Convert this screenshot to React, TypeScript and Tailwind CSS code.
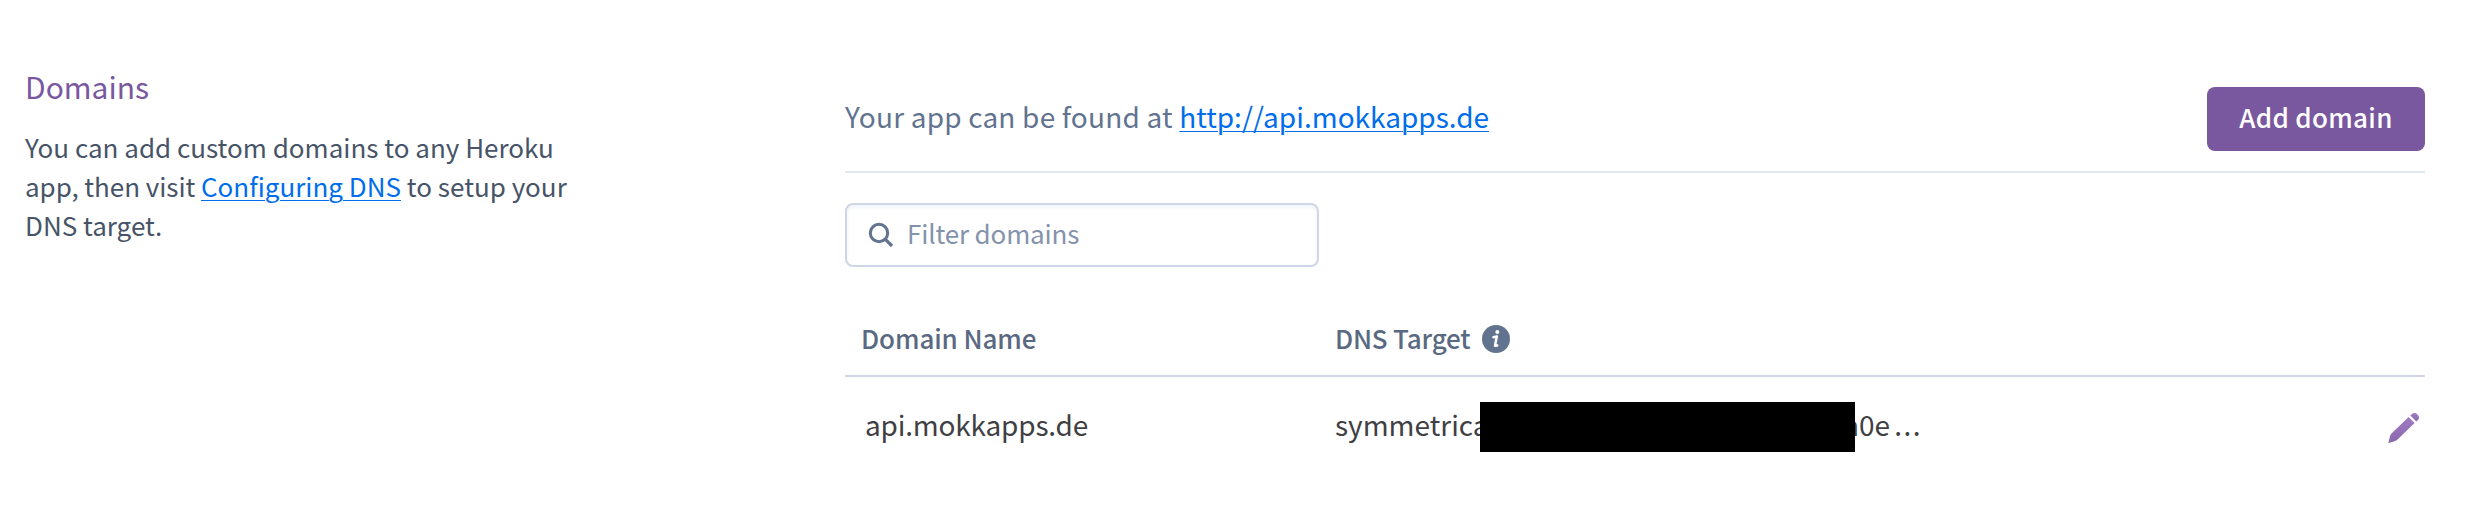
function SearchIcon() {
  return (
    <svg className="ml-[21px] mt-[17px] h-[28px] w-[28px] shrink-0" viewBox="0 0 28 28" fill="none" stroke="#62738f">
      <circle cx="11" cy="11" r="8.7" strokeWidth="3" />
      <path d="M17.2 17.2L24 24" strokeWidth="3.2" />
    </svg>
  );
}

function InfoIcon() {
  return (
    <svg className="mt-[18px] h-[28px] w-[28px]" viewBox="0 0 28 28">
      <circle cx="14" cy="14" r="14" fill="#62738f" />
      <circle cx="15.3" cy="6.9" r="2" fill="#fff" />
      <path d="M11.4 12.3L14.8 11.4L13 20.8L15.2 20.4" fill="none" stroke="#fff" strokeWidth="2.5" strokeLinejoin="round" strokeLinecap="round" />
    </svg>
  );
}

function PencilIcon() {
  return (
    <svg className="mr-[5px] mt-[13px] h-[32px] w-[32px]" viewBox="0 0 32 32">
      <defs>
        <linearGradient id="pencil" x1="0" y1="0" x2="0" y2="1">
          <stop offset="0" stopColor="#9e7cc1" />
          <stop offset="1" stopColor="#8c67ae" />
        </linearGradient>
      </defs>
      <path d="M0.3 31L2.2 23.5Q2.6 22.4 3.5 21.5L20.6 5L26.6 11L9.8 27.3Q9 28.2 7.8 28.8Q4.5 30.4 0.3 31Z" fill="url(#pencil)" />
      <path d="M22.3 3.5L24 1.9Q26.8 0 29.4 2.4Q32.3 5.2 30 8L28.3 9.6Z" fill="url(#pencil)" />
    </svg>
  );
}

export default function App() {
  return (
    <div className="flex h-[518px] w-[2486px] overflow-hidden bg-white font-['Noto_Sans_CJK_SC','Noto_Sans',sans-serif] text-[26px]">
      <section className="w-[845px] shrink-0 pl-[25px] pt-[66px]">
        <h2 className="text-[30px] leading-[40px] text-[#79589f]">Domains</h2>
        <p className="mt-[21px] w-[560px] leading-[39px] text-[#475468]">
          You can add custom domains to any Heroku
          <br />
          <span className="tracking-[-0.06px]">app, then visit </span>
          <a href="#dns" className="text-[#006deb] underline decoration-1 underline-offset-[3px]">Configuring DNS</a> to setup your
          <br />
          DNS target.
        </p>
      </section>
      <main className="w-[1580px] pt-[87px]">
        <header className="flex h-[86px] items-start justify-between border-b-2 border-[#e3e7f1]">
          <p className="whitespace-pre text-[28px] leading-[58px] text-[#62738f]">
            <span className="tracking-[0.2px]">Your app can be found at </span>
            <a href="#app" className="text-[#006deb] underline decoration-1 underline-offset-[3px]">http://api.mokkapps.de</a>
          </p>
          <button className="h-[64px] w-[218px] rounded-[8px] bg-[#79589f] text-center text-white">
            <span className="block h-full font-medium leading-[60px] tracking-[0.3px]">Add domain</span>
          </button>
        </header>
        <div className="mt-[30px] flex h-[64px] w-[474px] items-start rounded-[8px] border-2 border-[#cfd7e6] shadow-[inset_0_2px_4px_#eef1f7]">
          <SearchIcon />
          <span className="ml-[11px] leading-[55px] tracking-[-0.15px] text-[#8393ac]">Filter domains</span>
        </div>
        <div className="mt-[40px] flex h-[70px] border-b-2 border-[#cfd7e6] font-medium leading-[62px] text-[#596981]">
          <span className="w-[490px] pl-[16px] tracking-[-0.1px]">Domain Name</span>
          <div className="flex gap-[12px]">
            <span className="tracking-[-0.2px]">DNS Target</span>
            <InfoIcon />
          </div>
        </div>
        <div className="flex pt-[22px] text-[28px] leading-[50px] text-[#3f3f44]">
          <span className="w-[490px] pl-[20px] tracking-[-0.2px]">api.mokkapps.de</span>
          <div className="flex">
            <span className="w-[145px]">symmetrica</span>
            <span className="relative z-10 mt-[3px] h-[50px] w-[375px] bg-black" />
            <span className="-ml-[13px]">n0e</span>
            <span className="ml-[4px] tracking-[1.5px]">...</span>
          </div>
          <div className="ml-auto">
            <PencilIcon />
          </div>
        </div>
      </main>
    </div>
  );
}
